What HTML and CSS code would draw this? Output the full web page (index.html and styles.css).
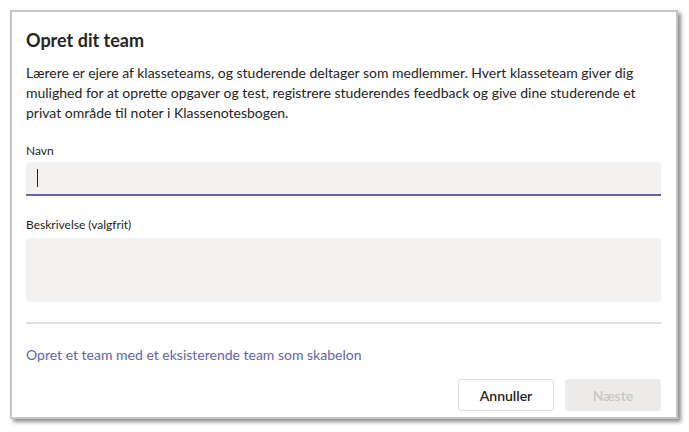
FILE: index.html
```html
<!DOCTYPE html>
<html lang="da">
<head>
  <meta charset="UTF-8">
  <meta name="viewport" content="width=device-width, initial-scale=1.0">
  <title>Opret dit team</title>
  <link rel="stylesheet" href="styles.css">
</head>
<body>
  <div class="dialog">
    <h1 class="title">Opret dit team</h1>
    <p class="intro">Lærere er ejere af klasseteams, og studerende deltager som medlemmer. Hvert klasseteam giver dig mulighed for at oprette opgaver og test, registrere studerendes feedback og give dine studerende et privat område til noter i Klassenotesbogen.</p>

    <label class="label" for="name">Navn</label>
    <div class="input">
      <span class="caret"></span>
    </div>

    <label class="label" for="desc">Beskrivelse (valgfrit)</label>
    <div class="textarea"></div>

    <hr class="divider">

    <a class="template-link" href="#">Opret et team med et eksisterende team som skabelon</a>

    <div class="actions">
      <button class="btn">Annuller</button>
      <button class="btn primary" disabled>Næste</button>
    </div>
  </div>
</body>
</html>
```

FILE: styles.css
```css
body {
  margin: 0;
  padding: 10px;
  background: #fff;
  font-family: 'Segoe UI', Lato, sans-serif;
  color: #252423;
}
.dialog {
  box-sizing: border-box;
  width: 668px;
  height: 409px;
  border: 2px solid #c6c6c6;
  box-shadow: 3px 3px 4px rgba(0,0,0,0.45);
  background: #fff;
  padding: 16px 15px 0 14px;
  display: flex;
  flex-direction: column;
}
.title {
  margin: 0;
  font-size: 18px;
  line-height: 24px;
  font-weight: 700;
}
.intro {
  margin: 11px 0 0;
  font-size: 14px;
  line-height: 20px;
}
.label {
  display: block;
  font-size: 12px;
  line-height: 16px;
  margin-top: 20px;
}
.input {
  margin-top: 3px;
  height: 32px;
  background: #f3f2f1;
  border-radius: 3px 3px 0 0;
  border-bottom: 2px solid #6264a7;
  display: flex;
  align-items: center;
  padding-left: 11px;
}
.caret {
  width: 1px;
  height: 18px;
  background: #252423;
}
.input + .label {
  margin-top: 21px;
}
.textarea {
  margin-top: 5px;
  height: 64px;
  background: #f3f2f1;
  border-radius: 3px;
}
.divider {
  margin: 20px 0 0;
  border: none;
  border-top: 2px solid #e1dfdd;
}
.template-link {
  margin-top: 21px;
  font-size: 14px;
  line-height: 20px;
  color: #6264a7;
  text-decoration: none;
  align-self: flex-start;
}
.actions {
  display: flex;
  justify-content: flex-end;
  gap: 11px;
  margin-top: 14px;
}
.btn {
  width: 96px;
  height: 32px;
  font-family: inherit;
  font-size: 14px;
  font-weight: 600;
  color: #252423;
  background: #fff;
  border: 1px solid #e1dfdd;
  border-radius: 3px;
}
.btn.primary {
  border-color: #edebe9;
  background: #edebe9;
  color: #c8c6c4;
}
```
